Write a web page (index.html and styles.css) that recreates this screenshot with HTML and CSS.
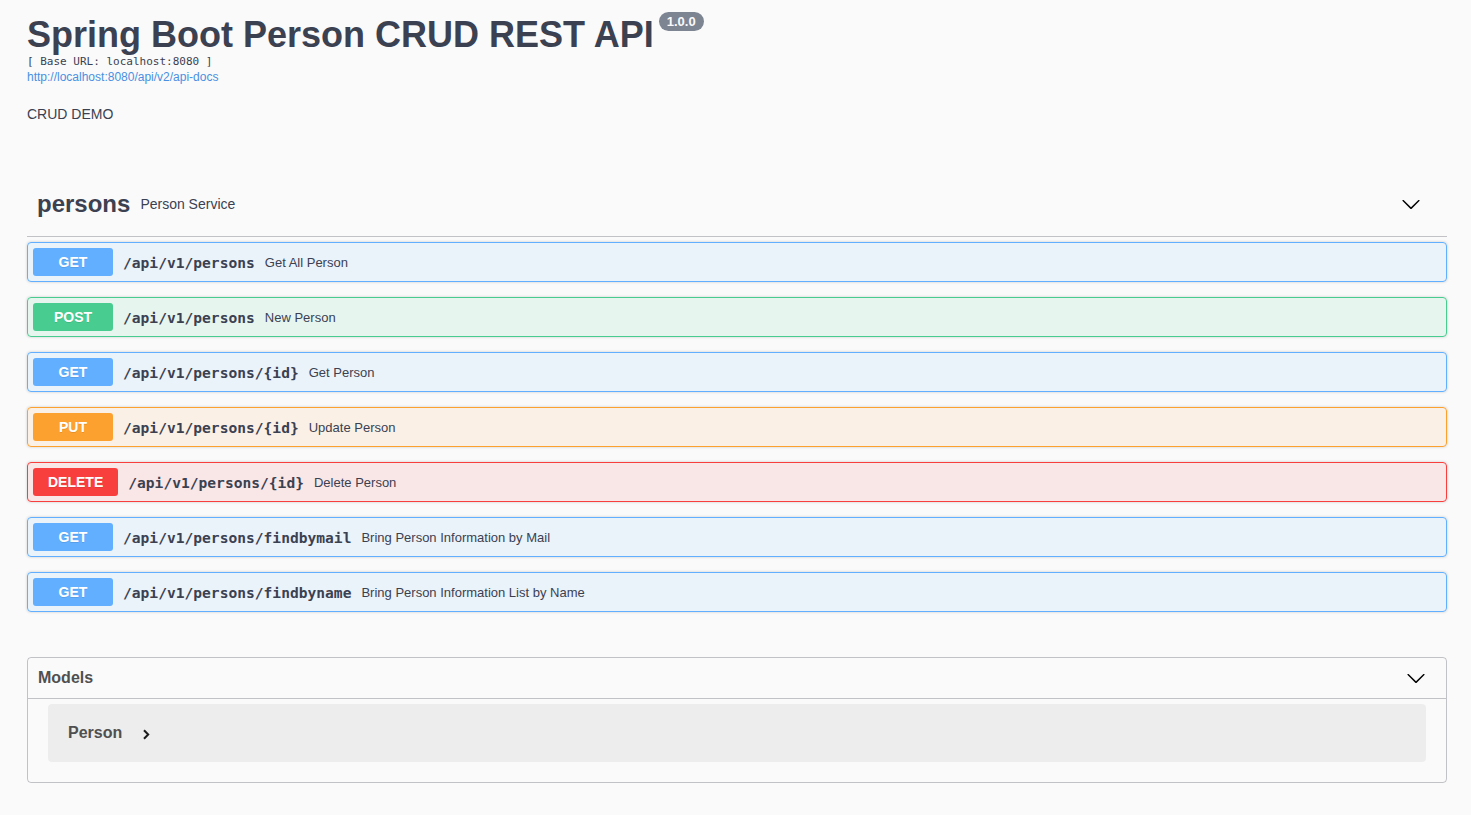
FILE: index.html
```html
<!DOCTYPE html>
<html lang="en">
<head>
<meta charset="utf-8">
<title>Swagger UI</title>
<link rel="stylesheet" href="styles.css">
</head>
<body>
<div class="wrapper">
  <div class="info">
    <h2 class="title">Spring Boot Person CRUD REST API <span class="version">1.0.0</span></h2>
    <pre class="base-url">[ Base URL: localhost:8080 ]</pre>
    <a class="spec-link" href="#">http://localhost:8080/api/v2/api-docs</a>
    <div class="description">CRUD DEMO</div>
  </div>

  <section class="tag">
    <h4 class="tag-header">
      <span class="tag-name">persons</span>
      <small class="tag-desc">Person Service</small>
      <span class="expand">
        <svg width="20" height="20" viewBox="0 0 20 20"><path d="M17.418 6.109c.272-.268.709-.268.979 0s.271.701 0 .969l-7.908 7.83c-.27.268-.707.268-.979 0l-7.908-7.83c-.27-.268-.27-.701 0-.969.271-.268.709-.268.979 0L10 13.25l7.418-7.141z"/></svg>
      </span>
    </h4>
    <div class="op op-get"><span class="method">GET</span><span class="path">/api/v1/persons</span><span class="desc">Get All Person</span></div>
    <div class="op op-post"><span class="method">POST</span><span class="path">/api/v1/persons</span><span class="desc">New Person</span></div>
    <div class="op op-get"><span class="method">GET</span><span class="path">/api/v1/persons/{id}</span><span class="desc">Get Person</span></div>
    <div class="op op-put"><span class="method">PUT</span><span class="path">/api/v1/persons/{id}</span><span class="desc">Update Person</span></div>
    <div class="op op-delete"><span class="method">DELETE</span><span class="path">/api/v1/persons/{id}</span><span class="desc">Delete Person</span></div>
    <div class="op op-get"><span class="method">GET</span><span class="path">/api/v1/persons/findbymail</span><span class="desc">Bring Person Information by Mail</span></div>
    <div class="op op-get"><span class="method">GET</span><span class="path">/api/v1/persons/findbyname</span><span class="desc">Bring Person Information List by Name</span></div>
  </section>

  <section class="models">
    <h4 class="models-header">
      <span class="models-title">Models</span>
      <svg width="20" height="20" viewBox="0 0 20 20"><path d="M17.418 6.109c.272-.268.709-.268.979 0s.271.701 0 .969l-7.908 7.83c-.27.268-.707.268-.979 0l-7.908-7.83c-.27-.268-.27-.701 0-.969.271-.268.709-.268.979 0L10 13.25l7.418-7.141z"/></svg>
    </h4>
    <div class="model-container">
      <span class="model-title">Person</span>
      <svg class="model-arrow" width="7" height="11" viewBox="0 0 7 11"><path d="M1 1.2 L5.2 5.5 L1 9.8" fill="none" stroke="#1a1a1a" stroke-width="2"/></svg>
    </div>
  </section>
</div>
</body>
</html>
```

FILE: styles.css
```css
html, body {
  margin: 0;
  padding: 0;
  background: #fafafa;
}

body {
  font-family: "Liberation Sans", Arial, sans-serif;
  color: #3b4151;
}

.wrapper {
  padding: 15px 24px 20px 27px;
}

/* Info */
.title {
  display: flex;
  align-items: flex-start;
  margin: 0;
  font-size: 36px;
  line-height: 40px;
  font-weight: 700;
  color: #3b4151;
}

.version {
  margin: -3px 0 0 5px;
  padding: 2px 8px;
  font-size: 13px;
  line-height: 15px;
  font-weight: 700;
  color: #fafafa;
  background: #7d8492;
  border-radius: 57px;
}

.base-url {
  margin: 0;
  font-family: "DejaVu Sans Mono", monospace;
  font-size: 11px;
  line-height: 14px;
  color: #3b4151;
}

.spec-link {
  display: block;
  font-size: 12px;
  line-height: 16px;
  color: #4990e2;
  text-decoration: none;
}

.description {
  margin-top: 21px;
  font-size: 14px;
  line-height: 17px;
}

/* Tag */
.tag {
  display: flow-root;
  margin-top: 48px;
  margin-bottom: 30px;
}

.tag-header {
  display: flex;
  align-items: center;
  height: 45px;
  margin: 0 0 5px;
  padding: 10px 20px 10px 10px;
  border-bottom: 1px solid rgba(59, 65, 81, .3);
  font-size: 24px;
  font-weight: 700;
  color: #3b4151;
}

.tag-desc {
  flex: 1;
  padding: 0 10px;
  font-size: 14px;
  font-weight: 400;
}

.expand {
  display: flex;
  margin-right: 6px;
}

/* Operations */
.op {
  display: flex;
  align-items: center;
  padding: 5px;
  margin-bottom: 15px;
  border: 1px solid;
  border-radius: 4px;
  box-shadow: 0 0 3px rgba(0, 0, 0, .19);
}

.method {
  min-width: 80px;
  box-sizing: border-box;
  padding: 6px 15px;
  border-radius: 3px;
  font-size: 14px;
  line-height: 16px;
  font-weight: 700;
  text-align: center;
  color: #fff;
  text-shadow: 0 1px 0 rgba(0, 0, 0, .1);
}

.path {
  padding: 0 10px;
  font-family: "DejaVu Sans Mono", monospace;
  font-size: 14.6px;
  font-weight: 700;
  color: #3b4151;
}

.desc {
  font-size: 13px;
  color: #3b4151;
}

.op-get { background: rgba(97, 175, 254, .1); border-color: #61affe; }
.op-get .method { background: #61affe; }
.op-post { background: rgba(73, 204, 144, .1); border-color: #49cc90; }
.op-post .method { background: #49cc90; }
.op-put { background: rgba(252, 161, 48, .1); border-color: #fca130; }
.op-put .method { background: #fca130; }
.op-delete { background: rgba(249, 62, 62, .1); border-color: #f93e3e; }
.op-delete .method { background: #f93e3e; }

/* Models */
.models {
  border: 1px solid rgba(59, 65, 81, .3);
  border-radius: 4px;
  padding-bottom: 20px;
}

.models-header {
  display: flex;
  align-items: center;
  justify-content: space-between;
  margin: 0 0 5px;
  padding: 10px 20px 10px 10px;
  border-bottom: 1px solid rgba(59, 65, 81, .3);
  font-size: 16px;
  font-weight: 700;
  color: #505050;
}

.models-header svg {
  display: block;
}

.model-container {
  display: flex;
  align-items: center;
  gap: 21px;
  margin: 0 20px;
  height: 58px;
  padding: 0 20px;
  background: rgba(0, 0, 0, .05);
  border-radius: 4px;
}

.model-title {
  font-size: 16px;
  font-weight: 700;
  color: #505050;
}

.model-arrow {
  display: block;
  margin-top: 2px;
}
```
